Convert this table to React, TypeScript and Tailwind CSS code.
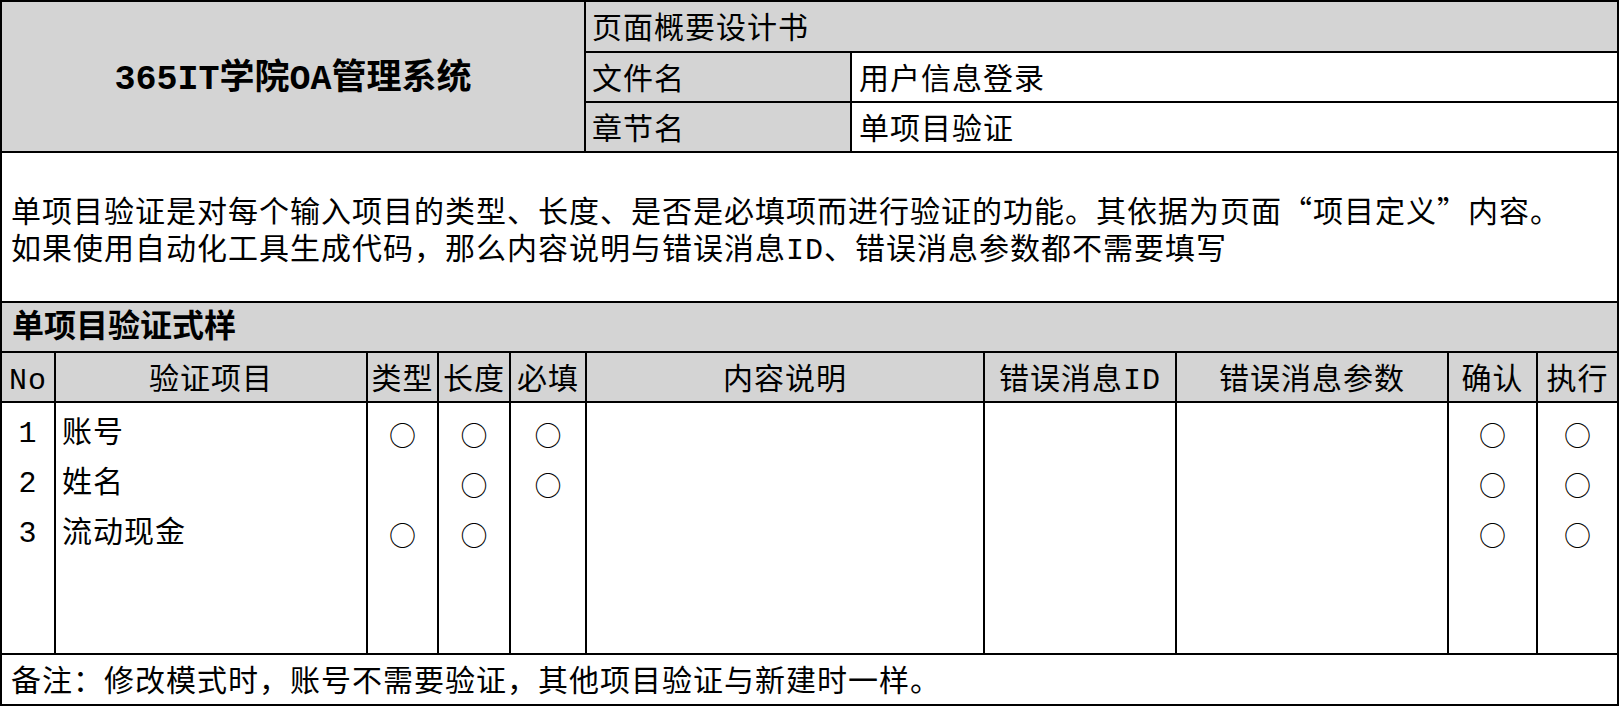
import React from "react"

const cols = [
  { label: "No", w: "w-[54px]" },
  { label: "验证项目", w: "w-[312px]" },
  { label: "类型", w: "w-[71px]" },
  { label: "长度", w: "w-[72px]" },
  { label: "必填", w: "w-[76px]" },
  { label: "内容说明", w: "w-[398px]" },
  { label: "错误消息ID", w: "w-[192px]" },
  { label: "错误消息参数", w: "w-[272px]" },
  { label: "确认", w: "w-[89px]" },
  { label: "执行", w: "w-[79px]" },
]

const rows = [
  { no: "1", name: "账号", type: true, len: true, req: true },
  { no: "2", name: "姓名", type: false, len: true, req: true },
  { no: "3", name: "流动现金", type: true, len: true, req: false },
]

function Mark({ on }: { on: boolean }) {
  return <span className="font-['Noto_Sans_CJK_SC',sans-serif] text-[27px] leading-none tracking-normal">{on ? "○" : ""}</span>
}

function cellFor(col: number, r: (typeof rows)[number]) {
  switch (col) {
    case 0:
      return <span className="w-full text-center">{r.no}</span>
    case 1:
      return <span className="pl-[6px]">{r.name}</span>
    case 2:
      return <Mark on={r.type} />
    case 3:
      return <Mark on={r.len} />
    case 4:
      return <Mark on={r.req} />
    case 8:
    case 9:
      return <Mark on={true} />
    default:
      return null
  }
}

export default function App() {
  return (
    <div className="w-[1619px] h-[708px] bg-white text-black font-['Liberation_Mono','Noto_Sans_CJK_SC',monospace] text-[30px] leading-[34px] tracking-[1px]">
      <div className="h-[706px] border-2 border-black flex flex-col">
        {/* header */}
        <div className="h-[151px] shrink-0 flex border-b-2 border-black overflow-hidden">
          <div className="w-[584px] shrink-0 border-r-2 border-black bg-[#d4d4d4] flex items-center justify-center pt-[6px]">
            <span className="text-[35px] font-bold tracking-normal">365IT学院OA管理系统</span>
          </div>
          <div className="flex-1 flex flex-col">
            <div className="h-[51px] shrink-0 border-b-2 border-black bg-[#d4d4d4] flex items-center pl-[6px] pt-[7px]">
              页面概要设计书
            </div>
            <div className="h-[50px] shrink-0 border-b-2 border-black flex">
              <div className="w-[266px] border-r-2 border-black bg-[#d4d4d4] flex items-center pl-[6px] pt-[7px]">文件名</div>
              <div className="flex-1 flex items-center pl-[7px] pt-[7px]">用户信息登录</div>
            </div>
            <div className="flex-1 min-h-0 flex">
              <div className="w-[266px] border-r-2 border-black bg-[#d4d4d4] flex items-center pl-[6px] pt-[7px]">章节名</div>
              <div className="flex-1 flex items-center pl-[7px] pt-[7px]">单项目验证</div>
            </div>
          </div>
        </div>

        {/* description */}
        <div className="h-[150px] shrink-0 border-b-2 border-black flex flex-col justify-center pl-[9px] pt-[6px] leading-[37px]">
          <p>
            单项目验证是对每个输入项目的类型、长度、是否是必填项而进行验证的功能。其依据为页面
            <span className="font-['Noto_Sans_CJK_SC',sans-serif]">“项目定义”</span>
            内容。
          </p>
          <p>如果使用自动化工具生成代码，那么内容说明与错误消息ID、错误消息参数都不需要填写</p>
        </div>

        {/* section title */}
        <div className="h-[50px] shrink-0 border-b-2 border-black bg-[#d4d4d4] flex items-center pl-[10px] pt-[4px]">
          <span className="text-[32px] font-bold tracking-normal">单项目验证式样</span>
        </div>

        {/* table header */}
        <div className="h-[50px] shrink-0 border-b-2 border-black bg-[#d4d4d4] flex">
          {cols.map((c, i) => (
            <div
              key={c.label}
              className={`${c.w} shrink-0 flex items-center justify-center whitespace-nowrap pt-[7px] ${i < cols.length - 1 ? "border-r-2 border-black" : ""}`}
            >
              {c.label}
            </div>
          ))}
        </div>

        {/* table body */}
        <div className="h-[252px] shrink-0 border-b-2 border-black flex">
          {cols.map((c, i) => (
            <div
              key={c.label}
              className={`${c.w} shrink-0 flex flex-col pt-[4px] ${i < cols.length - 1 ? "border-r-2 border-black" : ""}`}
            >
              {rows.map((r) => (
                <div key={r.no} className={`h-[50px] flex items-center pt-[4px] ${i === 1 ? "" : "justify-center"}`}>
                  {cellFor(i, r)}
                </div>
              ))}
            </div>
          ))}
        </div>

        {/* footer */}
        <div className="flex-1 flex items-center pl-[9px] pt-[6px]">
          备注：修改模式时，账号不需要验证，其他项目验证与新建时一样。
        </div>
      </div>
    </div>
  )
}
